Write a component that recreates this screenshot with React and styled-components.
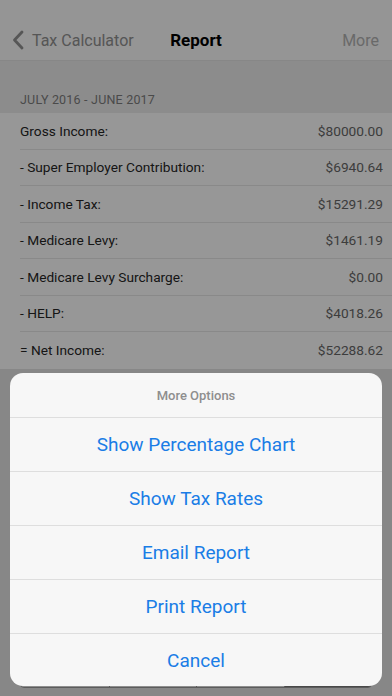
import React from "react";
import styled, { createGlobalStyle } from "styled-components";

const Global = createGlobalStyle`
  html, body { margin: 0; padding: 0; }
  body { width: 392px; height: 696px; overflow: hidden; background: #d8d8d8; }
  * { box-sizing: border-box; }
`;

const FONT = `Roboto, "Liberation Sans", Arial, sans-serif`;

const Page = styled.div`
  position: relative;
  width: 392px;
  height: 696px;
  display: flex;
  flex-direction: column;
  font-family: ${FONT};
  background: #e1e1e1;
  overflow: hidden;
`;

const NavBar = styled.header`
  height: 61px;
  padding-top: 20px;
  background: #f8f8f8;
  border-bottom: 1px solid #e2e2e2;
  display: grid;
  grid-template-columns: 1fr auto 1fr;
  align-items: center;
`;

const BackButton = styled.div`
  display: flex;
  align-items: center;
  gap: 8px;
  padding-left: 12px;
  color: #8f8f8f;
  font-size: 16px;
`;

const Title = styled.div`
  font-size: 17px;
  font-weight: 700;
  color: #000;
`;

const NavAction = styled.div`
  justify-self: end;
  padding-right: 13px;
  color: #b0b0b0;
  font-size: 16px;
`;

const SectionHeader = styled.div`
  height: 52px;
  background: #eaeaea;
  padding: 0 20px 6px;
  display: flex;
  align-items: flex-end;
  font-size: 12.5px;
  color: #7c7c7c;
  letter-spacing: 0.2px;
`;

const Table = styled.div`
  background: #fcfcfc;
  padding-left: 20px;
`;

const Row = styled.div`
  height: 36.5px;
  display: flex;
  align-items: center;
  justify-content: space-between;
  padding-right: 9px;
  font-size: 13.7px;
  border-bottom: ${(p) => (p.$last ? "none" : "1px solid #e4e4e4")};
`;

const Label = styled.span`
  color: #262626;
`;

const Value = styled.span`
  color: #666666;
`;

const Fill = styled.div`
  flex: 1;
  background: #e1e1e1;
`;

const Toolbar = styled.div`
  height: 37px;
  padding: 0 20px 8px;
  display: flex;
  align-items: flex-end;
  background: #e1e1e1;
`;

const Segmented = styled.div`
  flex: 1;
  height: 29px;
  display: grid;
  grid-template-columns: repeat(4, 1fr);
  border: 1px solid #9a9a9a;
  border-radius: 4px;
  overflow: hidden;
`;

const Segment = styled.div`
  background: ${(p) => (p.$active ? "#7a7a7a" : "#eeeeee")};
  border-left: ${(p) => (p.$first ? "none" : "1px solid #9a9a9a")};
`;

const Dim = styled.div`
  position: absolute;
  inset: 0;
  background: rgba(0, 0, 0, 0.4);
`;

const Sheet = styled.div`
  position: absolute;
  left: 10px;
  right: 10px;
  top: 373px;
  border-radius: 13px;
  background: #f7f7f7;
  overflow: hidden;
  display: flex;
  flex-direction: column;
`;

const SheetTitle = styled.div`
  height: 45px;
  display: flex;
  align-items: center;
  justify-content: center;
  font-size: 13px;
  font-weight: 500;
  color: #8e8e8e;
  border-bottom: 1px solid #dedede;
`;

const SheetButton = styled.div`
  height: ${(p) => (p.$last ? "52px" : "54px")};
  display: flex;
  align-items: center;
  justify-content: center;
  font-size: 19px;
  color: #1a7de6;
  border-bottom: ${(p) => (p.$last ? "none" : "1px solid #dedede")};
`;

const Chevron = () => (
  <svg width="12" height="20" viewBox="0 0 12 20">
    <path d="M10 2 L2.5 10 L10 18" fill="none" stroke="currentColor" strokeWidth="2.8" strokeLinecap="round" strokeLinejoin="round" />
  </svg>
);

const rows = [
  ["Gross Income:", "$80000.00"],
  ["- Super Employer Contribution:", "$6940.64"],
  ["- Income Tax:", "$15291.29"],
  ["- Medicare Levy:", "$1461.19"],
  ["- Medicare Levy Surcharge:", "$0.00"],
  ["- HELP:", "$4018.26"],
  ["= Net Income:", "$52288.62"],
];

const options = ["Show Percentage Chart", "Show Tax Rates", "Email Report", "Print Report", "Cancel"];

export default function App() {
  return (
    <>
      <Global />
      <Page>
        <NavBar>
          <BackButton>
            <Chevron />
            <span>Tax Calculator</span>
          </BackButton>
          <Title>Report</Title>
          <NavAction>More</NavAction>
        </NavBar>
        <SectionHeader>JULY 2016 - JUNE 2017</SectionHeader>
        <Table>
          {rows.map(([l, v], i) => (
            <Row key={l} $last={i === rows.length - 1}>
              <Label>{l}</Label>
              <Value>{v}</Value>
            </Row>
          ))}
        </Table>
        <Fill />
        <Toolbar>
          <Segmented>
            <Segment $first />
            <Segment />
            <Segment />
            <Segment $active />
          </Segmented>
        </Toolbar>
        <Dim />
        <Sheet>
          <SheetTitle>More Options</SheetTitle>
          {options.map((o, i) => (
            <SheetButton key={o} $last={i === options.length - 1}>
              {o}
            </SheetButton>
          ))}
        </Sheet>
      </Page>
    </>
  );
}
